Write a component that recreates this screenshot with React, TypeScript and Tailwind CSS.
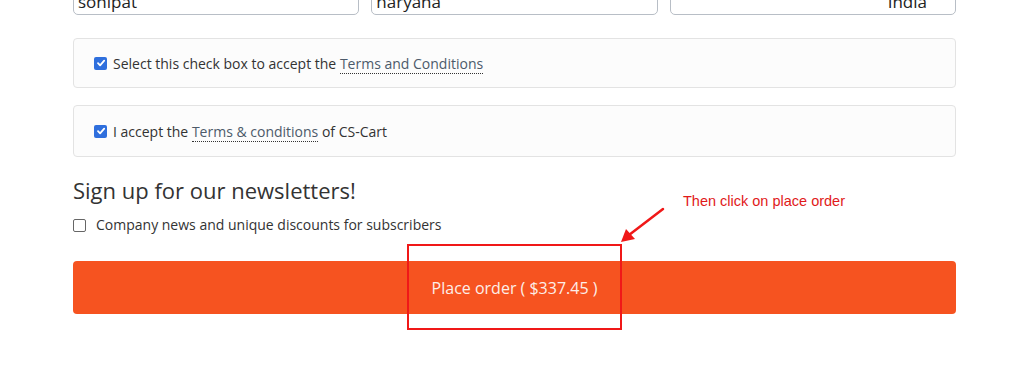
import React from "react";

function Check({ checked }: { checked: boolean }) {
  if (checked) {
    return (
      <span className="inline-flex h-[13px] w-[13px] shrink-0 items-center justify-center rounded-[2px] bg-[#2f6fdd]">
        <svg width="10" height="10" viewBox="0 0 10 10">
          <path d="M2 5.2 L4.1 7.3 L8.2 2.6" fill="none" stroke="#fff" strokeWidth="1.8" strokeLinecap="round" strokeLinejoin="round" />
        </svg>
      </span>
    );
  }
  return <span className="inline-block h-[13px] w-[13px] shrink-0 rounded-[2px] border border-[#666] bg-white" />;
}

export default function App() {
  const font = { fontFamily: '"Open Sans", "Noto Sans", sans-serif' };
  return (
    <div className="relative h-[380px] w-[1025px] overflow-hidden bg-white text-[#333]" style={font}>
      <div className="ml-[73px] w-[883px]">
        <div className="-mt-[21px] grid grid-cols-3 gap-x-[12px]">
          <div className="h-[36px] rounded-[5px] border border-[#b8bec6] bg-white pl-[4px] pt-[12px] text-[17px] leading-[20px] text-[#222]">sonipat</div>
          <div className="h-[36px] rounded-[5px] border border-[#b8bec6] bg-white pl-[4px] pt-[12px] text-[17px] leading-[20px] text-[#222]">haryana</div>
          <div className="h-[36px] rounded-[5px] border border-[#b8bec6] bg-white pr-[28px] pt-[12px] text-right text-[17px] leading-[20px] text-[#222]">India</div>
        </div>

        <div className="mt-[23px] flex h-[50px] items-center rounded-[4px] border border-[#e3e3e3] bg-[#fcfcfc] pl-[20px] text-[14px]">
          <Check checked />
          <span className="ml-[6px]">
            Select this check box to accept the{" "}
            <span className="border-b border-dotted border-[#333] text-[#4c5a6a]">Terms and Conditions</span>
          </span>
        </div>

        <div className="mt-[17px] flex h-[52px] items-center rounded-[4px] border border-[#e3e3e3] bg-[#fcfcfc] pl-[20px] text-[14px]">
          <Check checked />
          <span className="ml-[6px]">
            I accept the{" "}
            <span className="border-b border-dotted border-[#333] text-[#4c5a6a]">Terms &amp; conditions</span> of CS-Cart
          </span>
        </div>

        <div className="mt-[18px] text-[22px] leading-[30px] text-[#333]">Sign up for our newsletters!</div>

        <div className="mt-[10px] flex items-center text-[14px] leading-[20px]">
          <Check checked={false} />
          <span className="ml-[10px]">Company news and unique discounts for subscribers</span>
        </div>

        <div className="mt-[26px] flex h-[53px] items-center justify-center rounded-[4px] bg-[#f65320] text-[16px] text-[#fdeee8]">
          Place order ( $337.45 )
        </div>
      </div>

      <div className="absolute left-[407px] top-[244px] h-[86px] w-[215px] border-2 border-[#f01818]" />
      <svg className="absolute left-0 top-0" width="1025" height="380">
        <line x1="663" y1="209" x2="629" y2="235" stroke="#f01818" strokeWidth="2.5" strokeLinecap="round" />
        <polygon points="621,242 626,229 635,239" fill="#f01818" />
      </svg>
      <div
        className="absolute left-[683px] top-[192px] text-[14.5px] leading-[18px] text-[#e11a1a]"
        style={{ fontFamily: '"Liberation Sans", Arial, sans-serif' }}
      >
        Then click on place order
      </div>
    </div>
  );
}
